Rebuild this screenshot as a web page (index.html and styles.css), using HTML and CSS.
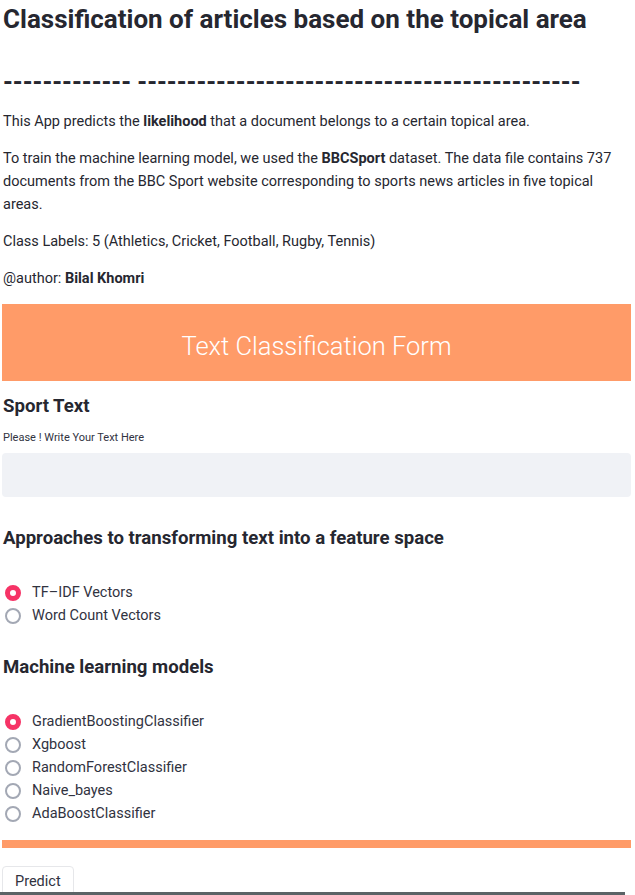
FILE: index.html
```html
<!DOCTYPE html>
<html>
<head>
<meta charset="utf-8">
<link rel="stylesheet" href="styles.css">
</head>
<body>
<main class="page">
  <h1 class="title">Classification of articles based on the topical area</h1>
  <div class="dashes">------------- ---------------------------------------------</div>
  <p class="para">This App predicts the <b>likelihood</b> that a document belongs to a certain topical area.</p>
  <p class="para">To train the machine learning model, we used the <b>BBCSport</b> dataset. The data file contains 737 documents from the BBC Sport website corresponding to sports news articles in five topical areas.</p>
  <p class="para">Class Labels: 5 (Athletics, Cricket, Football, Rugby, Tennis)</p>
  <p class="para">@author: <b>Bilal Khomri</b></p>

  <div class="banner">Text Classification Form</div>

  <h3 class="subhead first">Sport Text</h3>
  <div class="label">Please ! Write Your Text Here</div>
  <div class="textarea"></div>

  <h3 class="subhead">Approaches to transforming text into a feature space</h3>
  <div class="radios">
    <div class="radio"><span class="dot on"></span>TF–IDF Vectors</div>
    <div class="radio"><span class="dot"></span>Word Count Vectors</div>
  </div>

  <h3 class="subhead">Machine learning models</h3>
  <div class="radios">
    <div class="radio"><span class="dot on"></span>GradientBoostingClassifier</div>
    <div class="radio"><span class="dot"></span>Xgboost</div>
    <div class="radio"><span class="dot"></span>RandomForestClassifier</div>
    <div class="radio"><span class="dot"></span>Naive_bayes</div>
    <div class="radio"><span class="dot"></span>AdaBoostClassifier</div>
  </div>

  <div class="bar"></div>
  <button class="btn">Predict</button>
</main>
<div class="scrollbar"></div>
</body>
</html>
```
FILE: styles.css
```css
html, body {
  margin: 0;
  padding: 0;
  background: #ffffff;
  overflow: hidden;
}
body {
  font-family: Roboto, "Liberation Sans", sans-serif;
  color: #262730;
  font-size: 14.5px;
}
.page {
  width: 629px;
  padding-left: 2px;
}
.title {
  margin: 0;
  padding: 4px 0 0 1px;
  font-size: 26px;
  font-weight: 700;
  line-height: 30px;
}
.dashes {
  margin-top: 35px;
  padding-left: 1px;
  font-size: 25px;
  font-weight: 700;
  line-height: 28px;
}
.para {
  margin: 0;
  padding-left: 1px;
  line-height: 23px;
  margin-top: 14px;
}
.dashes + .para { margin-top: 13px; }
.banner {
  margin-top: 14px;
  height: 77px;
  background: #ff9b68;
  color: #ffffff;
  font-size: 25.5px;
  font-weight: 300;
  display: flex;
  align-items: center;
  justify-content: center;
  padding-top: 7px;
  box-sizing: border-box;
}
.subhead {
  margin: 0;
  padding-left: 1px;
  font-size: 18.6px;
  font-weight: 700;
  line-height: 24px;
  margin-top: 29px;
}
.subhead.first { margin-top: 13px; }
.label {
  padding-left: 1px;
  font-size: 11px;
  line-height: 14px;
  margin-top: 13px;
  color: #31333f;
}
.textarea {
  margin-top: 8px;
  height: 44px;
  background: #f0f2f6;
  border-radius: 4px;
}
.radios {
  margin-top: 31px;
  display: flex;
  flex-direction: column;
}
.radio {
  display: flex;
  align-items: center;
  height: 23px;
  line-height: 23px;
  color: #31333f;
}
.dot {
  width: 16px;
  height: 16px;
  box-sizing: border-box;
  border-radius: 50%;
  border: 2px solid #a3a8b4;
  margin: 0 11px 0 3px;
  flex: none;
}
.dot.on {
  border: 5px solid #f63366;
  background: #ffffff;
}
.radios + .subhead { margin-top: 28px; }
.bar {
  margin-top: 15px;
  height: 8px;
  background: #ff9b68;
}
.btn {
  margin-top: 18px;
  font-family: inherit;
  font-size: 14.5px;
  color: #31333f;
  background: #ffffff;
  border: 1px solid #e6e7ea;
  border-radius: 4px;
  padding: 0 12px;
  height: 32px;
  line-height: 30px;
}
.scrollbar {
  position: fixed;
  left: 0;
  bottom: 0;
  width: 625px;
  height: 3px;
  background: #5b6366;
}
```
